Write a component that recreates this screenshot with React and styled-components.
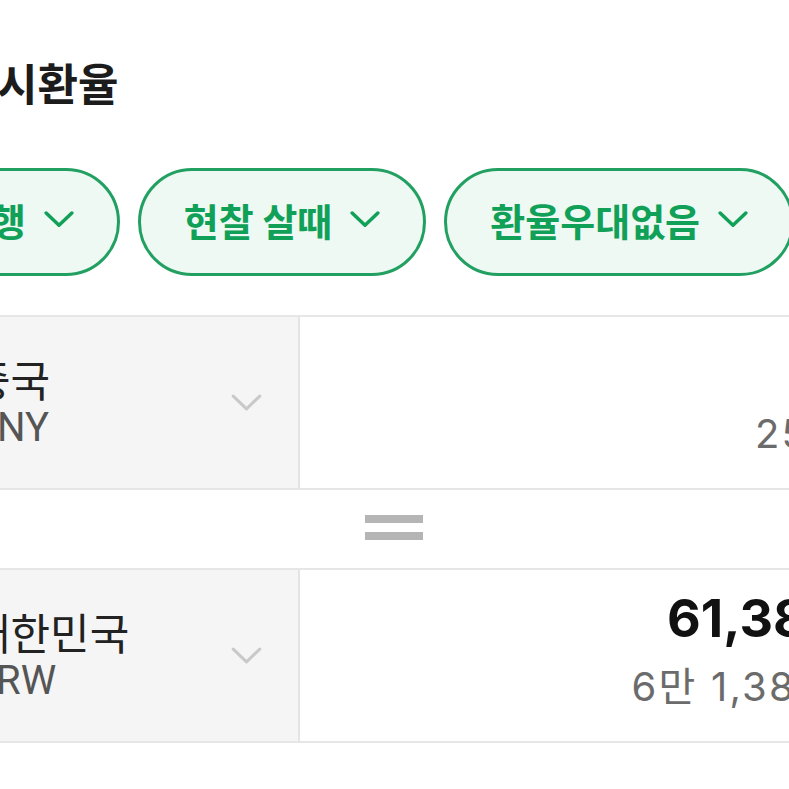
import React from "react";
import styled, { createGlobalStyle } from "styled-components";

const GlobalStyle = createGlobalStyle`
  html, body {
    margin: 0;
    padding: 0;
    background: #fff;
    overflow: hidden;
  }
  body {
    width: 789px;
    height: 789px;
    font-family: Inter, "Noto Sans CJK KR", sans-serif;
  }
`;

const green = "#10a058";

const Page = styled.div`
  width: 1108px;
  margin-left: -160px;
  padding-top: 54px;
`;

const Title = styled.h2`
  margin: 0 0 0 76px;
  font-family: "Noto Sans CJK KR", sans-serif;
  font-size: 44px;
  font-weight: 600;
  line-height: 56px;
  color: #1c1c1c;
`;

const FilterRow = styled.div`
  display: flex;
  gap: 18px;
  margin-top: 58px;
`;

const Pill = styled.button`
  display: inline-flex;
  align-items: center;
  gap: 18px;
  flex-shrink: 0;
  box-sizing: border-box;
  height: 108px;
  padding: 0 43px 6px;
  border: 3px solid #22a062;
  border-radius: 54px;
  background: #edf9f2;
  color: ${green};
  font-family: "Noto Sans CJK KR", sans-serif;
  font-size: 38px;
  font-weight: 700;
  white-space: nowrap;
`;

const Chevron = ({ color, width = 30, stroke = 3.5 }) => (
  <svg width={width} height={width * 0.56} viewBox="0 0 30 17" fill="none">
    <path d="M2 2 L15 14.5 L28 2" stroke={color} strokeWidth={stroke} strokeLinecap="round" strokeLinejoin="round" />
  </svg>
);

const Converter = styled.div`
  margin-top: 39px;
`;

const CurrencyRow = styled.div`
  display: grid;
  grid-template-columns: 460px 1fr;
  height: 171px;
  border-top: 2px solid #e6e6e6;
  border-bottom: 2px solid #e6e6e6;
`;

const CountryCell = styled.div`
  display: flex;
  align-items: center;
  justify-content: space-between;
  padding: 0 36px 0 131px;
  background: #f5f5f5;
  border-right: 2px solid #e4e4e4;
`;

const CountryText = styled.div`
  display: flex;
  flex-direction: column;
`;

const CountryName = styled.span`
  font-family: "Noto Sans CJK KR", sans-serif;
  font-size: 43px;
  line-height: 48px;
  color: #222;
`;

const CurrencyCode = styled.span`
  margin-top: 2px;
  font-family: Roboto, sans-serif;
  font-size: 40px;
  line-height: 48px;
  color: #555;
`;

const AmountCell = styled.div`
  display: flex;
  flex-direction: column;
  align-items: flex-end;
  padding: 19px 106px 0 0;
  background: #fff;
  white-space: nowrap;
`;

const Amount = styled.span`
  min-height: 60px;
  font-size: 52px;
  font-weight: 700;
  line-height: 60px;
  color: #111;
`;

const AmountReading = styled.span`
  margin: 14px -21px 0 0;
  font-size: 40px;
  line-height: 48px;
  letter-spacing: 2.2px;
  color: #6b6b6b;
`;

const EqualsRow = styled.div`
  display: flex;
  flex-direction: column;
  align-items: center;
  gap: 9px;
  height: 78px;
  padding-top: 25px;
  box-sizing: border-box;
`;

const EqualsBar = styled.span`
  width: 58px;
  height: 8px;
  background: #b5b5b5;
`;

const NextSection = styled.div`
  margin-top: 46px;
  border-top: 2px solid #eeeeee;
  height: 40px;
`;

const filters = ["하나은행", "현찰 살때", "환율우대없음"];

const rows = [
  { name: "중국", code: "CNY", amount: "", reading: "2500" },
  { name: "대한민국", code: "KRW", amount: "61,384", reading: "6만 1,384원" },
];

const CurrencyBlock = ({ row }) => (
  <CurrencyRow>
    <CountryCell>
      <CountryText>
        <CountryName>{row.name}</CountryName>
        <CurrencyCode>{row.code}</CurrencyCode>
      </CountryText>
      <Chevron color="#c9c9c9" width={31} stroke={3} />
    </CountryCell>
    <AmountCell>
      <Amount>{row.amount}</Amount>
      <AmountReading>{row.reading}</AmountReading>
    </AmountCell>
  </CurrencyRow>
);

export default function App() {
  return (
    <>
      <GlobalStyle />
      <Page>
        <Title>결제시환율</Title>
        <FilterRow>
          {filters.map((label) => (
            <Pill key={label}>
              {label}
              <Chevron color={green} />
            </Pill>
          ))}
        </FilterRow>
        <Converter>
          <CurrencyBlock row={rows[0]} />
          <EqualsRow>
            <EqualsBar />
            <EqualsBar />
          </EqualsRow>
          <CurrencyBlock row={rows[1]} />
        </Converter>
        <NextSection />
      </Page>
    </>
  );
}
